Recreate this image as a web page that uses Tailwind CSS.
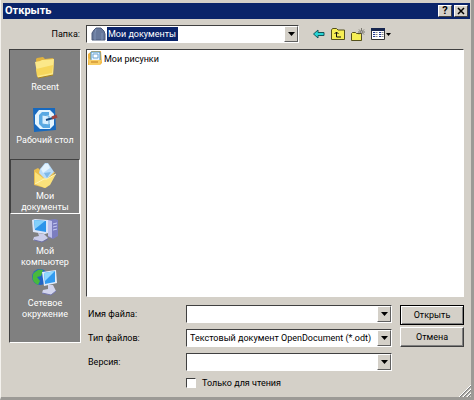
<!DOCTYPE html>
<html lang="ru">
<head>
<meta charset="utf-8">
<title>Открыть</title>
<script src="https://cdn.jsdelivr.net/npm/@tailwindcss/browser@4"></script>
</head>
<body class="h-screen overflow-hidden bg-[#d4d0c8] font-[Roboto,'Liberation_Sans',sans-serif] text-[9px] leading-3 text-black">
<main class="flex h-full flex-col border-r-3 border-b-3 border-l border-r-[#9c9a96] border-b-[#9c9a96] border-l-[#f4f2ee] pt-[3px] pr-px pl-0.5">
  <header class="flex h-4 shrink-0 items-center gap-0.5 bg-[#0a246a] px-0.5">
    <h1 class="flex-1 text-[11px] font-bold text-white">Открыть</h1>
    <button aria-label="Справка" class="flex h-3 w-3.5 items-center justify-center border border-t-white border-r-[#404040] border-b-[#404040] border-l-white bg-[#d4d0c8] text-[11px] font-bold">?</button>
    <button aria-label="Закрыть" class="flex h-3 w-3.5 items-center justify-center border border-t-white border-r-[#404040] border-b-[#404040] border-l-white bg-[#d4d0c8]">
      <svg width="8" height="8" viewBox="0 0 8 8"><path d="M1 1l6 6M7 1L1 7" stroke="#000" stroke-width="1.5"/></svg>
    </button>
  </header>

  <form class="flex min-h-0 flex-1 flex-col pt-1.5 pr-1.5 pl-1.5">
    <div class="flex h-4.5 shrink-0 items-center">
      <label for="folder" class="w-[77px] shrink-0 pr-1.5 text-right">Папка:</label>
      <div class="flex h-4.5 min-w-0 flex-[218] items-center border border-t-[#404040] border-r-white border-b-white border-l-[#404040] bg-white pl-1">
        <svg class="shrink-0" width="15" height="14" viewBox="0 0 15 14"><path d="M1 6l2-3 2-2h5l3 3 1 3v6H1z" fill="#66789b" stroke="#4b5a7b"/><path d="M4 6v7M5 2l-1 4M11 6v7" stroke="#7f92b5" fill="none"/></svg>
        <select id="folder" class="ml-px h-3.5 appearance-none bg-[#0a246a] px-px text-white"><option>Мои документы</option></select>
        <span class="flex-1"></span>
        <button type="button" aria-label="Выбрать папку" class="flex h-4 w-3.5 items-center justify-center border border-t-white border-r-[#606060] border-b-[#606060] border-l-white bg-[#d4d0c8]"><svg width="7" height="4" viewBox="0 0 7 4"><path d="M0 0h7L3.500 4z"/></svg></button>
      </div>
      <div class="flex flex-[159] items-center gap-1.5 pl-3.5">
        <button type="button" aria-label="Назад"><svg width="12" height="10" viewBox="0 0 12 10"><path d="M.5 5L5 1v2.500h6v3H5V9z" fill="#28d5d5" stroke="#14555a"/></svg></button>
        <button type="button" aria-label="На уровень вверх"><svg width="14" height="12" viewBox="0 0 14 12"><path d="M.5 11.500V2l1-1.500h4L7 2h6.500v9.500z" fill="#f6ee55" stroke="#55511c"/><path d="M5.500 4v5H10M3.500 6l2-2 2 2" fill="none" stroke="#111"/></svg></button>
        <button type="button" aria-label="Новая папка"><svg width="14" height="13" viewBox="0 0 14 13"><path d="M.5 12.500V5.500l1-1h3l1 1h5v7z" fill="#f6ee55" stroke="#55511c"/><path d="M10.500 0v8M7 4h7M8 1.500l5 5M13 1.500l-5 5" stroke="#55534c" stroke-width=".7"/><path d="M10 3.500h1v1h-1z" fill="#fff"/></svg></button>
        <button type="button" aria-label="Вид"><svg width="20" height="12" viewBox="0 0 20 12"><path d="M.5.5h13v11H.5z" fill="#fff" stroke="#333"/><path d="M0 0h14v3H0z" fill="#17264f"/><path d="M2 4.500h2M2 6.500h2M2 8.500h2M8 4.500h2M8 6.500h2M8 8.500h2" stroke="#203a95"/><path d="M4.500 4.500h2M4.500 6.500h2M4.500 8.500h2M10.500 4.500h2M10.500 6.500h2M10.500 8.500h2" stroke="#888"/><path d="M15 5h5L17.500 8z"/></svg></button>
      </div>
    </div>

    <div class="flex min-h-0 flex-1 gap-[5px] pt-1.5">
      <nav class="flex h-[294px] w-[72px] shrink-0 flex-col border border-t-[#404040] border-r-white border-b-white border-l-[#404040] bg-[#808080] text-center leading-[11px] text-white">
        <button type="button" class="flex h-[55px] shrink-0 flex-col items-center gap-0.5 pt-1">
          <svg width="24" height="26" viewBox="0 0 24 26"><path d="M3 5l1-1 6-1 2 2 8-1 1 2-1 15-16 2z" fill="#e0b23e"/><path d="M2 8l5-1 2-1 12-1-1 16-15 3z" fill="#fbe88a"/><path d="M4 22l15-3 1-8-17 4z" fill="#f6d65b"/><path d="M5 24l15-3" stroke="#a8821c"/></svg>
          <span>Recent</span>
        </button>
        <button type="button" class="flex h-[54px] shrink-0 flex-col items-center gap-0.5 pt-0.5">
          <svg width="26" height="26" viewBox="0 0 26 26"><path d="M1 1h22l1 22-22 2z" fill="#1769bf"/><path d="M7 3h11l4 4v11l-4 4H8l-5-5V8z" fill="#e4f5ff"/><path d="M7 8l3-3h7v3h-6v9h7v4h-7l-4-4z" fill="#58a9e4"/><path d="M10 8l7 1v9l-7-1z" fill="#d8efff" stroke="#5ba9df"/><path d="M14 13l7-2" stroke="#184a80" stroke-width="2"/><path d="M20 11l5-2" stroke="#9e4540" stroke-width="3"/></svg>
          <span class="whitespace-nowrap">Рабочий стол</span>
        </button>
        <button type="button" class="flex h-[55px] shrink-0 flex-col items-center gap-0.5 border border-t-[#404040] border-r-white border-b-white border-l-[#404040] pt-0.5">
          <svg class="shrink-0" width="26" height="27" viewBox="0 0 26 27"><path d="M2 8l4-2 4 4 13 0-8 15-2 1L2 23z" fill="#e9bd4c"/><path d="M8 7l5-6 3 0 6 9-8 8-7-7z" fill="#b9dcfa"/><path d="M9 7l4-5 3 0 2 4-7 5z" fill="#e3f3ff"/><path d="M12 11l7-1-4 6z" fill="#7fb9e8"/><path d="M3 22V10l8 6 4 1 9-5-6 11-5 3z" fill="#fbe27b"/><path d="M3 22l9-5 3 0 9-5" fill="none" stroke="#fff4b5"/></svg>
          <span>Мои<br>документы</span>
        </button>
        <button type="button" class="flex h-[54px] shrink-0 flex-col items-center gap-0.5 pt-1">
          <svg class="shrink-0" width="28" height="26" viewBox="0 0 28 26"><path d="M17 2l7-1 3 1v16l-5 3-5-2z" fill="#7c7ec0"/><path d="M17 2l4 1v17l-4-2z" fill="#c0c2ec"/><path d="M22 6l4-1M22 9l4-1M22 12l4-1" stroke="#c8ccf5"/><path d="M1 2l3-1 13 1v13l-3 1L2 14z" fill="#dbe5f8"/><path d="M3 2l12 1v11L4 12z" fill="#2d94ea"/><path d="M3 2l11 1-10 8z" fill="#83d0fc"/><path d="M7 15l6 1 4 4-6 4-9-2 1-3 5-1z" fill="#cacde9"/><path d="M3 22l8 2 6-3" stroke="#6b6da6" fill="none"/></svg>
          <span>Мой<br>компьютер</span>
        </button>
        <button type="button" class="flex shrink-0 flex-col items-center gap-0.5">
          <svg width="28" height="28" viewBox="0 0 28 28"><circle cx="9" cy="9" r="8" fill="#2264c3"/><path d="M2 6q5-6 10-4l-2 6-4 1 3 4-2 4Q0 14 2 6z" fill="#48b93d"/><path d="M11 4l14-2 1 13-13 3z" fill="#e1ebfa"/><path d="M13 5l11-2v11l-10 2z" fill="#329aef"/><path d="M13 5l11-2-10 10z" fill="#91d8ff"/><path d="M17 17h5l3 6-5 4-9-2 1-3 5-1z" fill="#d2d5ee"/><path d="M11 25l9 2 5-4" stroke="#7477af" fill="none"/></svg>
          <span>Сетевое<br>окружение</span>
        </button>
      </nav>

      <div class="flex min-w-0 flex-1 flex-col">
        <ul class="h-[248px] shrink-0 border border-t-[#404040] border-r-white border-b-white border-l-[#404040] bg-white p-px">
          <li class="flex items-center gap-px">
            <svg width="15" height="15" viewBox="0 0 15 15"><path d="M0 3l4-3h9l1 12-2 2H0z" fill="#f2b63f"/><path d="M3 1h9v9H3z" fill="#e6f4ff" stroke="#438fc9"/><path d="M5 3h5v4H5z" fill="#fff" stroke="#6ba4d1"/><path d="M0 7l3 2h10l-1 5H1z" fill="#f8ce65"/><path d="M3 11h7" stroke="#c17d20"/></svg>
            <span>Мои рисунки</span>
          </li>
        </ul>
        <div class="flex gap-2 pt-2">
          <div class="grid flex-1 grid-cols-[100px_1fr] items-center gap-y-1.5">
            <label for="name" class="pl-0.5">Имя файла:</label>
            <div class="flex h-4.5 min-w-0 border border-t-[#404040] border-r-white border-b-white border-l-[#404040] bg-white">
              <input id="name" type="text" class="min-w-0 flex-1 px-1 outline-none">
              <button type="button" aria-label="Показать имена" class="flex w-3.5 items-center justify-center border border-t-white border-r-[#606060] border-b-[#606060] border-l-white bg-[#d4d0c8]"><svg width="7" height="4" viewBox="0 0 7 4"><path d="M0 0h7L3.500 4z"/></svg></button>
            </div>
            <label for="type" class="pl-0.5">Тип файлов:</label>
            <div class="flex h-4.5 min-w-0 border border-t-[#404040] border-r-white border-b-white border-l-[#404040] bg-white">
              <select id="type" class="min-w-0 flex-1 appearance-none pl-[3px]"><option>Текстовый документ OpenDocument (*.odt)</option></select>
              <button type="button" aria-label="Показать типы" class="flex w-3.5 items-center justify-center border border-t-white border-r-[#606060] border-b-[#606060] border-l-white bg-[#d4d0c8]"><svg width="7" height="4" viewBox="0 0 7 4"><path d="M0 0h7L3.500 4z"/></svg></button>
            </div>
            <label for="version" class="pl-0.5">Версия:</label>
            <div class="flex h-4.5 min-w-0 border border-t-[#404040] border-r-white border-b-white border-l-[#404040] bg-white">
              <select id="version" class="min-w-0 flex-1 appearance-none pl-[3px]"><option></option></select>
              <button type="button" aria-label="Показать версии" class="flex w-3.5 items-center justify-center border border-t-white border-r-[#606060] border-b-[#606060] border-l-white bg-[#d4d0c8]"><svg width="7" height="4" viewBox="0 0 7 4"><path d="M0 0h7L3.500 4z"/></svg></button>
            </div>
            <label class="col-start-2 flex items-center gap-1.5"><input type="checkbox" class="size-2.5 appearance-none border border-t-[#404040] border-r-white border-b-white border-l-[#404040] bg-white">Только для чтения</label>
          </div>
          <div class="flex w-16 flex-col gap-0.5">
            <button class="h-5 border border-black bg-[#d4d0c8] shadow-[inset_1px_1px_#fff,inset_-1px_-1px_#808080]">Открыть</button>
            <button type="button" class="h-5 border border-t-white border-r-[#404040] border-b-[#404040] border-l-white bg-[#d4d0c8] shadow-[inset_-1px_-1px_#808080]">Отмена</button>
          </div>
        </div>
      </div>
    </div>
  </form>
  <svg class="absolute right-[3px] bottom-[3px]" width="12" height="12" viewBox="0 0 12 12"><path d="M1 12L12 1M5 12l7-7M9 12l3-3" stroke="#808080" stroke-width="1.500"/><path d="M0 12L12 0M4 12l8-8M8 12l4-4" stroke="#fff"/></svg>
</main>
</body>
</html>
